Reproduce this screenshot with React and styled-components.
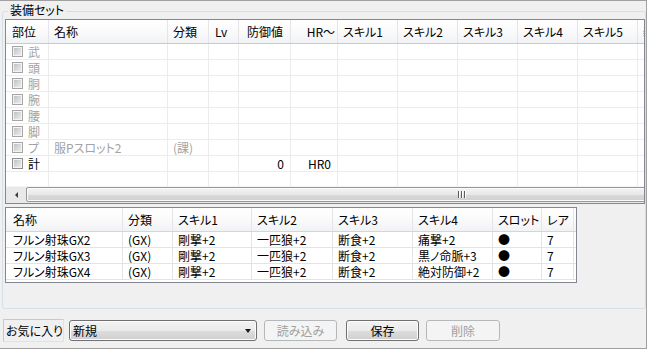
import React from 'react';
import styled, { createGlobalStyle } from 'styled-components';

const Global = createGlobalStyle`
  html, body { margin: 0; padding: 0; background: #f0f0f0; }
  body {
    font-family: "Noto Sans CJK JP", "Noto Sans", sans-serif;
    font-size: 12px;
    font-feature-settings: "palt";
    color: #000;
  }
  * { box-sizing: border-box; }
`;

const Window = styled.div`
  width: 647px;
  height: 349px;
  background: #f0f0f0;
  border-top: 1px solid #a0a0a0;
  border-right: 1px solid #a0a0a0;
  border-bottom: 1px solid #a0a0a0;
  display: flex;
  flex-direction: column;
  overflow: hidden;
`;

const GroupBox = styled.section`
  position: relative;
  margin: 10px 0 0 2px;
  height: 298px;
  flex-shrink: 0;
  border: 1px solid #d5dfe5;
  border-radius: 3px;
  padding: 7px 0 0 2px;
  display: flex;
  flex-direction: column;
  gap: 3px;
`;

const GroupTitle = styled.div`
  position: absolute;
  top: -9px;
  left: 5px;
  padding: 0 2px;
  line-height: 14px;
  height: 14px;
  background: #f0f0f0;
`;

const Grid = styled.div`
  width: ${p => p.$w}px;
  height: ${p => p.$h}px;
  flex-shrink: 0;
  border: 1px solid #828790;
  background: #fff;
  overflow: hidden;
  display: flex;
  flex-direction: column;
`;

const HeadRow = styled.div`
  display: grid;
  grid-template-columns: ${p => p.$cols};
  height: 24px;
  flex-shrink: 0;
  background: linear-gradient(#ffffff 0%, #fbfbfc 45%, #f1f2f4 100%);
  border-bottom: 1px solid ${p => p.$line};
`;

const HeadCell = styled.div`
  display: flex;
  align-items: center;
  justify-content: ${p => (p.$right ? 'flex-end' : 'flex-start')};
  padding: 0 ${p => p.$pr ?? 5}px 0 ${p => p.$pl ?? 5}px;
  border-right: 1px solid #e3e5e8;
  white-space: nowrap;
  overflow: hidden;
  line-height: 14px;
`;

const BodyRow = styled.div`
  display: grid;
  grid-template-columns: ${p => p.$cols};
  height: ${p => p.$h ?? 16}px;
  flex-shrink: 0;
  border-bottom: ${p => (p.$noLine ? 'none' : `1px solid ${p.$line}`)};
`;

const Cell = styled.div`
  display: flex;
  align-items: center;
  justify-content: ${p => (p.$right ? 'flex-end' : 'flex-start')};
  padding: 0 ${p => p.$pr ?? 5}px 0 ${p => p.$pl ?? 5}px;
  border-right: 1px solid ${p => p.$line};
  white-space: nowrap;
  overflow: hidden;
  line-height: 14px;
  color: ${p => (p.$dim ? '#a3a3a3' : '#000')};
  gap: 5px;
`;

const Check = styled.span`
  width: 11px;
  height: 11px;
  flex-shrink: 0;
  border: 1px solid ${p => (p.$dim ? '#a6a6a6' : '#8e8f8f')};
  background: linear-gradient(135deg, #b9bcc0 0%, #d9dadc 55%, #f0f0f0 100%);
  box-shadow: inset 0 0 0 1px #f4f4f4;
`;

const Filler = styled.div`
  flex: 1;
`;

const HScroll = styled.div`
  height: 17px;
  flex-shrink: 0;
  display: flex;
  align-items: stretch;
  background: #e9e9e9;
  border-top: 1px solid #f4f4f4;
`;

const ScrollArrow = styled.div`
  width: 20px;
  flex-shrink: 0;
  display: flex;
  align-items: center;
  justify-content: center;
  &::before {
    content: '';
    border-style: solid;
    border-width: 3px 3px 3px 0;
    border-color: transparent #3c3c3c transparent transparent;
  }
`;

const Thumb = styled.div`
  width: 872px;
  flex-shrink: 0;
  margin: 0 0 1px 0;
  border: 1px solid #979797;
  border-radius: 2px;
  background: linear-gradient(#f4f4f4 0%, #e8e8e8 50%, #d9d9d9 51%, #d0d0d0 100%);
  box-shadow: inset 0 0 0 1px #fafafa;
  display: flex;
  align-items: center;
  justify-content: center;
`;

const Grip = styled.div`
  width: 8px;
  height: 7px;
  background: repeating-linear-gradient(90deg, #5a5a5a 0 1px, #ffffff 1px 2px, transparent 2px 3px);
`;

const BottomBar = styled.div`
  display: flex;
  align-items: center;
  margin-top: 10px;
  padding-left: 3px;
`;

const FavLabel = styled.div`
  width: 61px;
  height: 23px;
  display: flex;
  align-items: center;
  padding-left: 2px;
  border: 1px solid;
  border-color: #c9c9c9 #e2e2e2 #e2e2e2 #c9c9c9;
  line-height: 14px;
  white-space: nowrap;
`;

const winButtonBg = 'linear-gradient(#f2f2f2 0%, #ebebeb 50%, #dddddd 51%, #cfcfcf 100%)';

const Combo = styled.div`
  margin-left: 5px;
  width: 188px;
  height: 21px;
  border: 1px solid #707070;
  border-radius: 3px;
  background: ${winButtonBg};
  box-shadow: inset 0 0 0 1px #fcfcfc;
  display: flex;
  align-items: center;
  justify-content: space-between;
  padding: 0 5px 0 3px;
  line-height: 14px;
  &::after {
    content: '';
    border-style: solid;
    border-width: 4px 3px 0 3px;
    border-color: #1a1a1a transparent transparent transparent;
  }
`;

const Button = styled.button`
  margin-left: ${p => p.$ml}px;
  width: ${p => p.$w ?? 73}px;
  height: 21px;
  padding: 0;
  font: inherit;
  font-feature-settings: "palt";
  line-height: 14px;
  border-radius: 3px;
  border: 1px solid ${p => (p.disabled ? '#b5b8ba' : '#707070')};
  background: ${p => (p.disabled ? '#f4f4f4' : winButtonBg)};
  box-shadow: ${p => (p.disabled ? 'none' : 'inset 0 0 0 1px #fcfcfc')};
  color: ${p => (p.disabled ? '#a0a0a0' : '#000')};
`;

const setCols = [
  { key: 'part', title: '部位', w: 43, pl: 6 },
  { key: 'name', title: '名称', w: 119 },
  { key: 'cls', title: '分類', w: 41 },
  { key: 'lv', title: 'Lv', w: 30, pl: 6 },
  { key: 'def', title: '防御値', w: 52, pl: 8 },
  { key: 'hr', title: 'HR～', w: 47, pl: 12, right: true },
  { key: 's1', title: 'スキル1', w: 60 },
  { key: 's2', title: 'スキル2', w: 60 },
  { key: 's3', title: 'スキル3', w: 60 },
  { key: 's4', title: 'スキル4', w: 60 },
  { key: 's5', title: 'スキル5', w: 60 },
  { key: 'deco', title: '装飾品1', w: 80 },
];

const setRows = [
  { part: '武', dim: true },
  { part: '頭', dim: true },
  { part: '胴', dim: true },
  { part: '腕', dim: true },
  { part: '腰', dim: true },
  { part: '脚', dim: true },
  { part: 'プ', name: '服Pスロット2', cls: '(課)', dim: true },
  { part: '計', def: '0', hr: 'HR0' },
];

const rightKeys = { def: true, hr: true };

const decoCols = [
  { key: 'name', title: '名称', w: 117, pl: 7 },
  { key: 'cls', title: '分類', w: 50 },
  { key: 's1', title: 'スキル1', w: 79 },
  { key: 's2', title: 'スキル2', w: 81 },
  { key: 's3', title: 'スキル3', w: 80 },
  { key: 's4', title: 'スキル4', w: 80 },
  { key: 'slot', title: 'スロット', w: 49 },
  { key: 'rare', title: 'レア', w: 32 },
];

const decoRows = [
  { name: 'フルン射珠GX2', cls: '(GX)', s1: '剛撃+2', s2: '一匹狼+2', s3: '断食+2', s4: '痛撃+2', slot: '●', rare: '7' },
  { name: 'フルン射珠GX3', cls: '(GX)', s1: '剛撃+2', s2: '一匹狼+2', s3: '断食+2', s4: '黒ノ命脈+3', slot: '●', rare: '7' },
  { name: 'フルン射珠GX4', cls: '(GX)', s1: '剛撃+2', s2: '一匹狼+2', s3: '断食+2', s4: '絶対防御+2', slot: '●', rare: '7' },
];

const colTemplate = cols => cols.map(c => `${c.w}px`).join(' ');

function SetGrid() {
  const cols = colTemplate(setCols);
  const line = '#ececec';
  return (
    <Grid $w={640} $h={185}>
      <HeadRow $cols={cols} $line="#c9cacc">
        {setCols.map(c => (
          <HeadCell key={c.key} $pl={c.pl} $right={c.right} $pr={c.right ? 2 : undefined}>{c.title}</HeadCell>
        ))}
      </HeadRow>
      {setRows.map((r, i) => (
        <BodyRow key={i} $cols={cols} $line={line}>
          {setCols.map(c =>
            c.key === 'part' ? (
              <Cell key={c.key} $line={line} $dim={r.dim} $pl={6}>
                <Check $dim={r.dim} />
                {r.part}
              </Cell>
            ) : (
              <Cell key={c.key} $line={line} $dim={r.dim} $right={rightKeys[c.key]} $pr={rightKeys[c.key] ? 6 : undefined}>
                {r[c.key] || ''}
              </Cell>
            )
          )}
        </BodyRow>
      ))}
      <BodyRow $cols={cols} $line={line} $h={14} $noLine>
        {setCols.map(c => (
          <Cell key={c.key} $line={line} />
        ))}
      </BodyRow>
      <Filler />
      <HScroll>
        <ScrollArrow />
        <Thumb>
          <Grip />
        </Thumb>
      </HScroll>
    </Grid>
  );
}

function DecoGrid() {
  const cols = colTemplate(decoCols);
  const line = '#e3e3e3';
  return (
    <Grid $w={572} $h={76}>
      <HeadRow $cols={cols} $line="#d5d5d5">
        {decoCols.map(c => (
          <HeadCell key={c.key} $pl={c.pl}>{c.title}</HeadCell>
        ))}
      </HeadRow>
      {decoRows.map((r, i) => (
        <BodyRow key={i} $cols={cols} $line={line}>
          {decoCols.map(c => (
            <Cell key={c.key} $line={line} $pl={c.pl}>{r[c.key]}</Cell>
          ))}
        </BodyRow>
      ))}
    </Grid>
  );
}

export default function App() {
  return (
    <>
      <Global />
      <Window>
        <GroupBox>
          <GroupTitle>装備セット</GroupTitle>
          <SetGrid />
          <DecoGrid />
        </GroupBox>
        <BottomBar>
          <FavLabel>お気に入り</FavLabel>
          <Combo>新規</Combo>
          <Button $ml={7} disabled>読み込み</Button>
          <Button $ml={9}>保存</Button>
          <Button $ml={7} $w={74} disabled>削除</Button>
        </BottomBar>
      </Window>
    </>
  );
}
